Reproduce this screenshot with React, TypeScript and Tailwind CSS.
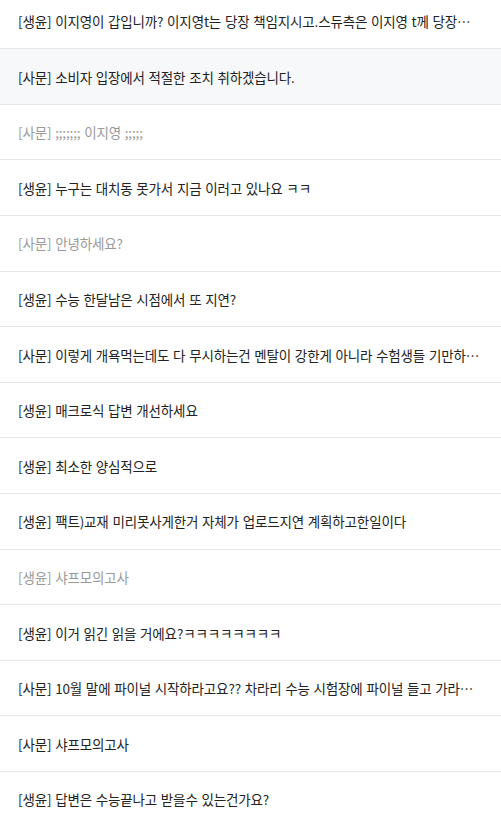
import React from "react";

const rows: { t: string; gray?: boolean; active?: boolean }[] = [
  { t: "[생윤] 이지영이 갑입니까? 이지영t는 당장 책임지시고.스듀측은 이지영 t께 당장…" },
  { t: "[사문] 소비자 입장에서 적절한 조치 취하겠습니다.", active: true },
  { t: "[사문] ;;;;;;; 이지영 ;;;;;", gray: true },
  { t: "[생윤] 누구는 대치동 못가서 지금 이러고 있나요 ㅋㅋ" },
  { t: "[사문] 안녕하세요?", gray: true },
  { t: "[생윤] 수능 한달남은 시점에서 또 지연?" },
  { t: "[사문] 이렇게 개욕먹는데도 다 무시하는건 멘탈이 강한게 아니라 수험생들 기만하는 겁니다" },
  { t: "[생윤] 매크로식 답변 개선하세요" },
  { t: "[생윤] 최소한 양심적으로" },
  { t: "[생윤] 팩트)교재 미리못사게한거 자체가 업로드지연 계획하고한일이다" },
  { t: "[생윤] 샤프모의고사", gray: true },
  { t: "[생윤] 이거 읽긴 읽을 거에요?ㅋㅋㅋㅋㅋㅋㅋㅋ" },
  { t: "[사문] 10월 말에 파이널 시작하라고요?? 차라리 수능 시험장에 파이널 들고 가라고 하시지요" },
  { t: "[사문] 샤프모의고사" },
  { t: "[생윤] 답변은 수능끝나고 받을수 있는건가요?" },
];

export default function App() {
  return (
    <div
      className="w-[501px] h-[824px] overflow-hidden bg-white"
      style={{ fontFamily: '"Noto Sans CJK KR", "Noto Sans", sans-serif' }}
    >
      <ul className="-mt-[6.3px]">
        {rows.map((r, i) => (
          <li
            key={i}
            className={`border-b border-[#e8e8e8] pl-[18px] pr-[18px] py-[17.3px] ${r.active ? "bg-[#f7f8fa]" : "bg-white"}`}
          >
            <p
              className={`truncate text-[13.5px] leading-[20px] tracking-[-0.15px] [word-spacing:0.9px] ${r.gray ? "text-[#9a9a9a]" : "text-[#222222]"}`}
            >
              {r.t}
            </p>
          </li>
        ))}
      </ul>
    </div>
  );
}
